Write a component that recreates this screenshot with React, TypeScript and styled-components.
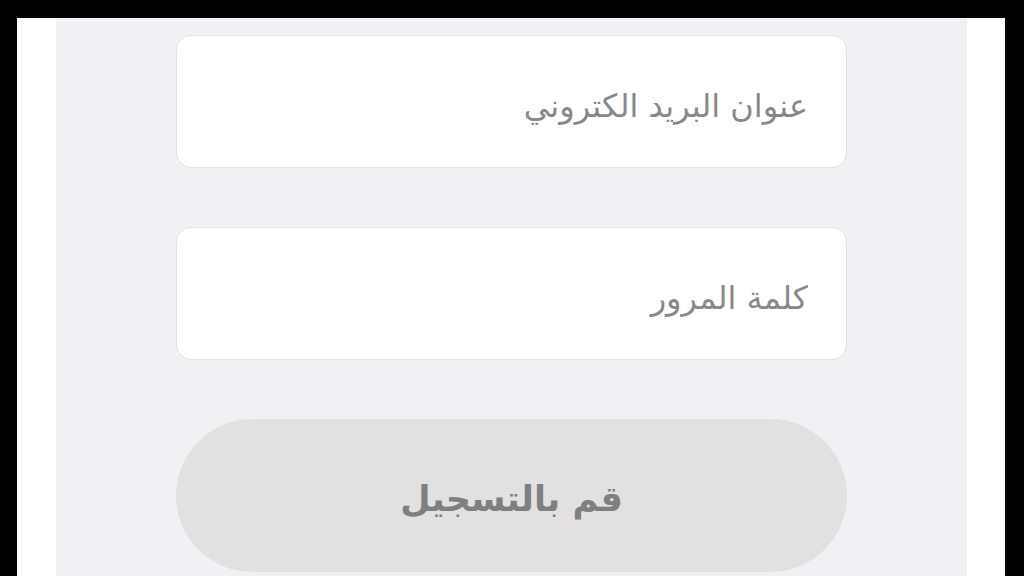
import React from 'react';
import styled, { createGlobalStyle } from 'styled-components';

const GlobalStyle = createGlobalStyle`
	html, body {
		margin: 0;
		padding: 0;
		height: 576px;
		overflow: hidden;
		background: #000;
	}
	#root {
		height: 100%;
	}
`;

const Frame = styled.div`
	box-sizing: border-box;
	height: 100%;
	padding: 18px 19px 0 17px;
`;

const Sheet = styled.div`
	box-sizing: border-box;
	height: 100%;
	background: #fff;
	padding: 0 38px 0 39px;
`;

const Panel = styled.div`
	box-sizing: border-box;
	height: 100%;
	background: #f0f1f4;
	display: flex;
	justify-content: center;
	padding-top: 17px;
`;

const Form = styled.form`
	width: 671px;
	display: flex;
	flex-direction: column;
	direction: rtl;
	margin: 0;
`;

const Field = styled.input`
	box-sizing: border-box;
	height: 133px;
	width: 100%;
	margin: 0 0 59px;
	padding: 8px 38px 0;
	border: 1.5px solid #e3e3e6;
	border-radius: 15px;
	background: #fff;
	font-family: "DejaVu Sans", "Noto Sans", sans-serif;
	font-size: 32px;
	color: #333;
	outline: none;
	direction: rtl;

	&::placeholder {
		color: #888;
	}
`;

const SubmitButton = styled.button`
	box-sizing: border-box;
	height: 153px;
	width: 100%;
	border: none;
	border-radius: 77px;
	background: #e1e1e1;
	color: #7f7f7f;
	font-family: "DejaVu Sans", "Noto Sans", sans-serif;
	font-size: 35px;
	font-weight: 700;
	padding-top: 8px;
	direction: rtl;
`;

const App = () => (
	<>
		<GlobalStyle />
		<Frame>
			<Sheet>
				<Panel>
					<Form onSubmit={e => e.preventDefault()}>
						<Field type="email" placeholder="عنوان البريد الكتروني" />
						<Field type="password" placeholder="كلمة المرور" />
						<SubmitButton type="submit" disabled>قم بالتسجيل</SubmitButton>
					</Form>
				</Panel>
			</Sheet>
		</Frame>
	</>
);

export default App;
